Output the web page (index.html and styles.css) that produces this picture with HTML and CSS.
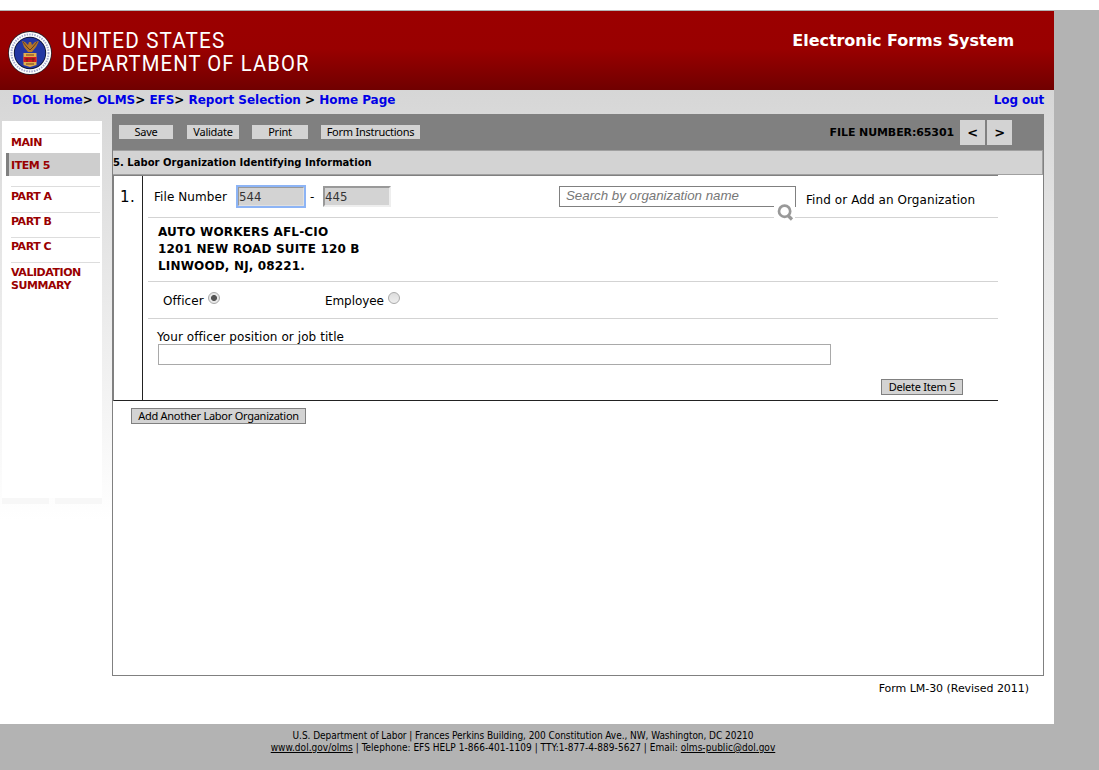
FILE: index.html
```html
<!DOCTYPE html>
<html lang="en">
<head>
<meta charset="utf-8">
<title>Electronic Forms System</title>
<link rel="stylesheet" href="styles.css">
</head>
<body>
<div class="page">
  <header class="banner">
    <svg class="seal" viewBox="0 0 44 44" aria-hidden="true">
      <circle cx="22" cy="22" r="21.9" fill="#29202c"/>
      <circle cx="22" cy="22" r="21.1" fill="#fff"/>
      <circle cx="22" cy="22" r="18.5" fill="none" stroke="#a5abd0" stroke-width="2" stroke-dasharray="1.5 1.1"/>
      <circle cx="22" cy="22" r="16.2" fill="#111638"/>
      <circle cx="22" cy="22" r="15.3" fill="#2336a2"/>
      <path d="M14 10l3 1 3 3 1-3h2l1 3 3-3 4-1-3 6-4 5h-4l-4-5z" fill="#b4762b"/>
      <path d="M15 11l4 5 3 3 3-3 4-5" fill="none" stroke="#4d3020" stroke-width=".8"/>
      <path d="M15.5 22h13v12l-6.5 2-6.5-2z" fill="#e3ad4a"/>
      <path d="M15.5 26h13v5h-13z" fill="#d31721"/>
      <path d="M17 28h10M18 24h8M18 33h8M19 27v4M25 27v4" stroke="#582615" stroke-width=".8"/>
    </svg>
    <div class="agency"><span class="agency-top">UNITED STATES</span><span class="agency-bottom">DEPARTMENT OF LABOR</span></div>
    <div class="system">Electronic Forms System</div>
  </header>
  <div class="body-area">
    <nav class="crumbs">
      <div class="trail"><a>DOL Home</a>&gt; <a>OLMS</a>&gt; <a>EFS</a>&gt; <a>Report Selection</a> &gt; <a>Home Page</a></div>
      <a class="logout">Log out</a>
    </nav>
    <div class="columns">
      <aside class="side">
        <div class="menu">
          <a class="menu-main">MAIN</a>
          <a class="active">ITEM 5</a>
          <a class="part-a">PART A</a>
          <a class="part">PART B</a>
          <a class="part">PART C</a>
          <a class="summary">VALIDATION<br>SUMMARY</a>
        </div>
        <div class="side-foot"><i></i><i></i></div>
      </aside>
      <main class="panel">
        <div class="toolbar">
          <button class="tool save">Save</button>
          <button class="tool validate">Validate</button>
          <button class="tool print">Print</button>
          <button class="tool instructions">Form Instructions</button>
          <span class="file-number">FILE NUMBER:65301</span>
          <button class="arrow">&lt;</button>
          <button class="arrow">&gt;</button>
        </div>
        <h1 class="heading"><span>5. Labor Organization Identifying Information</span></h1>
        <section class="entry">
          <div class="ordinal">1.</div>
          <div class="fields">
            <div class="row file-row">
              <label class="file-label">File Number</label>
              <div class="num focused"><span>544</span></div>
              <span class="dash">-</span>
              <div class="num"><span>445</span></div>
              <div class="search"><span>Search by organization name</span>
                <svg class="glass" viewBox="0 0 21 20" aria-hidden="true"><path d="M0 0h21v20H0z" fill="#fff"/><circle cx="10.6" cy="7.2" r="5.6" fill="none" stroke="#999" stroke-width="2.7"/><path d="M14 11.5l4 4" stroke="#999" stroke-width="3.2"/></svg>
              </div>
              <span class="find">Find or Add an Organization</span>
            </div>
            <div class="row address"><b>AUTO WORKERS AFL-CIO</b><b>1201 NEW ROAD SUITE 120 B</b><b>LINWOOD, NJ, 08221.</b></div>
            <div class="row roles">
              <span class="officer">Officer</span><i class="radio on"></i>
              <span class="employee">Employee</span><i class="radio"></i>
            </div>
            <div class="title-row">
              <label>Your officer position or job title</label>
              <div class="title-input"></div>
              <button class="outlined delete">Delete Item 5</button>
            </div>
          </div>
        </section>
        <button class="outlined add">Add Another Labor Organization</button>
      </main>
    </div>
    <div class="revision"><span>Form LM-30 (Revised 2011)</span></div>
  </div>
</div>
<footer class="footer">
  <div class="foot-one">U.S. Department of Labor | Frances Perkins Building, 200 Constitution Ave., NW, Washington, DC 20210</div>
  <div class="foot-two"><u>www.dol.gov/olms</u> | Telephone: EFS HELP 1-866-401-1109 | TTY:1-877-4-889-5627 | Email: <u>olms-public@dol.gov</u></div>
</footer>
</body>
</html>
```
FILE: styles.css
```css
* { box-sizing: border-box; }
body { margin: 0; height: 770px; overflow: hidden; background: #b3b3b3; border-top: 10px solid #fff; font-family: "DejaVu Sans", sans-serif; font-size: 12px; color: #000; white-space: nowrap; }
button { padding: 0; border: 0; border-radius: 0; background: #d3d3d3; color: #000; font-family: "Noto Sans", sans-serif; font-size: 11px; line-height: 14px; letter-spacing: -0.25px; white-space: nowrap; }
.page { width: 1054px; height: 714px; background: #fff; border-top: 1px solid #b3b3b3; }
.banner { display: flex; height: 79px; padding-left: 8px; background: linear-gradient(#9b0000 0, #990000 48%, #700000 100%); color: #fff; }
.seal { width: 44px; height: 44px; margin-top: 20px; }
.agency { display: flex; flex-direction: column; width: 300px; margin: 18px 0 0 10px; font-family: Roboto, sans-serif; font-size: 22px; line-height: 23px; letter-spacing: 1.2px; }
.agency span { transform-origin: left; }
.agency-top { transform: scaleX(0.94); }
.agency-bottom { transform: scaleX(0.92); }
.system { margin: 20px 40px 0 auto; font-size: 16px; line-height: 20px; font-weight: bold; letter-spacing: -0.05px; }
.body-area { height: 634px; background: linear-gradient(#d6d6d6 0, #dcdcdc 60px, #fff 430px); }
.crumbs { display: flex; height: 24px; padding: 2px 10px 0 12px; font-weight: bold; line-height: 16px; font-size: 12px; letter-spacing: -0.03px; }
.crumbs a { color: #0000e6; }
.logout { margin-left: auto; letter-spacing: -0.15px; }
.columns { display: flex; height: 562px; }
.side { width: 100px; margin: 7px 10px 0 2px; font-size: 11px; font-weight: bold; letter-spacing: -0.45px; color: #990000; }
.menu { height: 377px; background: #fff; padding-top: 12px; }
.menu a { display: block; margin-left: 9px; width: 89px; border-top: 1px solid #ddd; line-height: 13px; }
.menu .menu-main { height: 20px; padding-top: 2px; }
.menu .active { height: 23px; width: 94px; margin: 0 0 10px 4px; padding: 6px 0 0 2px; border: 0; border-left: 3px solid #808080; background: #cecece; }
.menu .part-a { height: 26px; padding-top: 3px; }
.menu .part { height: 25px; padding-top: 2px; }
.menu .summary { padding-top: 3px; }
.side-foot { display: flex; justify-content: space-between; height: 6px; }
.side-foot i { width: 47px; background: #f7f7f7; }
.panel { width: 932px; height: 562px; border: 1px solid #808080; border-top: 0; background: #fff; }
.toolbar { display: flex; height: 36px; background: #808080; padding: 6px 31px 0 6px; }
.tool { height: 14px; margin-top: 5px; line-height: 14px; }
.save { width: 54px; }
.validate { width: 52px; margin-left: 14px; }
.print { width: 56px; margin-left: 13px; }
.instructions { width: 99px; margin-left: 13px; }
.file-number { margin: 6px 6px 0 auto; font-size: 11px; font-weight: bold; line-height: 14px; letter-spacing: -0.1px; }
.arrow { width: 25px; height: 25px; font: bold 13px "DejaVu Sans", sans-serif; }
.arrow + .arrow { margin-left: 2px; }
.heading { margin: 0; height: 25px; border: 1px solid #a0a0a0; border-left: 0; background: #d3d3d3; font-size: 10px; line-height: 23px; letter-spacing: 0.03px; }
.entry { display: flex; width: 885px; height: 226px; border-top: 1px solid #808080; border-bottom: 1px solid #222; border-left: 1px solid #808080; }
.ordinal { width: 29px; padding: 12px 0 0 6px; border-right: 1px solid #222; font-size: 15px; line-height: 18px; letter-spacing: 0.5px; }
.fields { flex: 1; margin-left: 5px; letter-spacing: 0.08px; }
.row { border-bottom: 1px solid #d3d3d3; }
.file-row { display: flex; height: 42px; padding-top: 10px; }
.file-label { width: 83px; padding: 3px 0 0 6px; line-height: 16px; margin-right: 6px; }
.num { width: 68px; height: 21px; border: 2px solid; border-color: #999 #eee #eee #999; background: #d3d3d3; color: #333; font-family: "DejaVu Sans Condensed", "DejaVu Sans", sans-serif; font-size: 13px; line-height: 18px; letter-spacing: 0; }
.focused { border-color: #999 #e0e0e0 #e0e0e0 #999; outline: 2px solid #8db4f5; outline-offset: -1px; }
.dash { width: 18px; padding: 3px 0 0 5px; line-height: 16px; }
.search { position: relative; width: 237px; height: 21px; margin-left: 168px; border: 1px solid #808080; padding-left: 6px; font: italic 13.3px/18px "Liberation Sans", sans-serif; letter-spacing: 0; color: #777; }
.glass { position: absolute; left: 214px; top: 17px; width: 21px; height: 20px; }
.find { margin: 6px 0 0 10px; line-height: 16px; }
.address { height: 64px; padding: 6px 0 0 10px; display: flex; flex-direction: column; line-height: 17px; letter-spacing: 0.16px; }
.roles { display: flex; height: 37px; padding: 10px 0 0 15px; line-height: 18px; }
.radio { width: 12px; height: 12px; border: 1px solid #aaa; border-radius: 50%; background: linear-gradient(#ddd, #eee); }
.radio.on { background: radial-gradient(circle, #555 0 2.6px, #e8e8e8 3.4px); }
.officer { width: 45px; }
.employee { width: 63px; margin-left: 105px; letter-spacing: -0.08px; }
.title-row { display: flex; flex-direction: column; padding: 10px 35px 0 9px; }
.title-row label { height: 15px; line-height: 16px; }
.title-input { width: 673px; height: 21px; margin-left: 1px; border: 1px solid #a9a9a9; background: #fff; }
.outlined { height: 16px; border: 1px solid #808080; line-height: 14px; }
.delete { width: 82px; margin: 14px 0 0 auto; }
.add { display: block; width: 175px; margin: 7px 0 0 18px; }
.revision { padding: 6px 25px 0 0; text-align: right; font-size: 11px; line-height: 14px; letter-spacing: -0.04px; }
.footer { width: 1046px; padding-top: 6px; text-align: center; font-family: "DejaVu Sans Condensed", "DejaVu Sans", sans-serif; font-size: 10px; line-height: 12px; }
.foot-one { letter-spacing: -0.05px; }
.foot-two { letter-spacing: 0.03px; }
```
